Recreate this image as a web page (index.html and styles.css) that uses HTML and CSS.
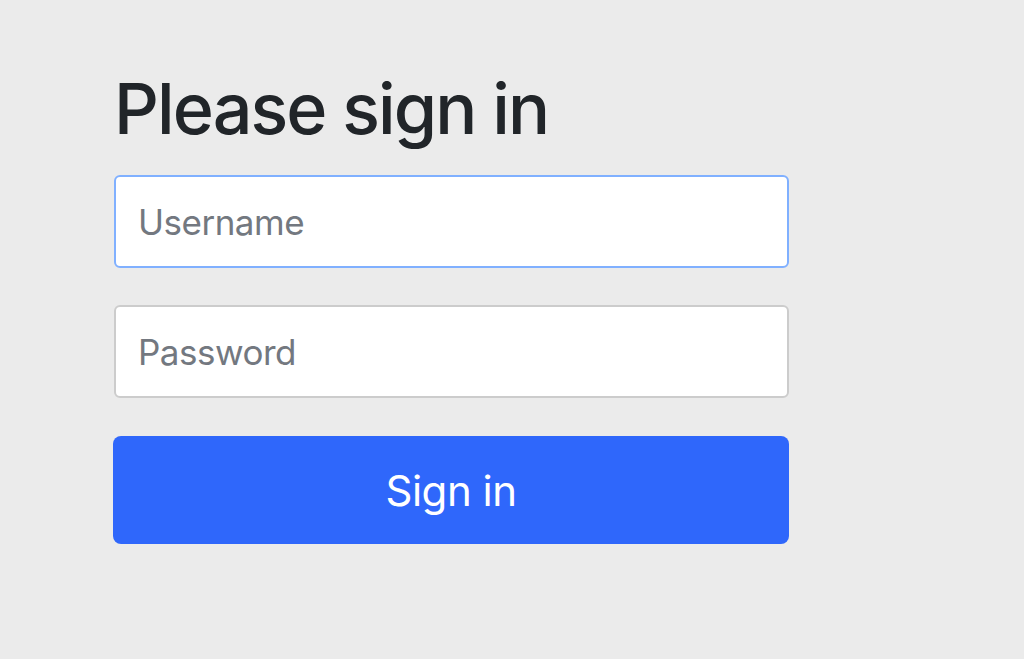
FILE: index.html
```html
<!DOCTYPE html>
<html lang="en">
<head>
<meta charset="utf-8">
<title>Please sign in</title>
<link rel="stylesheet" href="styles.css">
</head>
<body>
<div class="container">
  <form class="form-signin">
    <h2 class="heading">Please sign in</h2>
    <input class="field focused" type="text" placeholder="Username">
    <input class="field" type="password" placeholder="Password">
    <button class="btn" type="button">Sign in</button>
  </form>
</div>
</body>
</html>
```
FILE: styles.css
```css
html, body {
  margin: 0;
  padding: 0;
  background: #ebebeb;
  height: 100%;
}
body {
  font-family: Inter, "Liberation Sans", Arial, sans-serif;
  color: #212529;
}
.container {
  padding: 69px 0 0 113px;
}
.form-signin {
  width: 676px;
  display: flex;
  flex-direction: column;
}
.heading {
  margin: 0 0 26px 1px;
  font-size: 70px;
  font-weight: 500;
  line-height: 80px;
  letter-spacing: -1.9px;
}
.field {
  box-sizing: border-box;
  height: 93px;
  margin: 0 0 37px 1px;
  width: 675px;
  padding: 0 22px;
  border: 2px solid #cccccc;
  border-radius: 6px;
  background: #fff;
  font-family: Inter, "Liberation Sans", Arial, sans-serif;
  font-size: 35px;
  letter-spacing: -0.5px;
  color: #212529;
  outline: none;
}
.field::placeholder {
  color: #737880;
}
.field.focused {
  border-color: #80b0ff;
}
.btn {
  box-sizing: border-box;
  height: 108px;
  width: 676px;
  margin: 1px 0 0 0;
  border: none;
  border-radius: 8px;
  background: #2f67fb;
  color: #fff;
  font-family: Inter, "Liberation Sans", Arial, sans-serif;
  font-size: 42px;
  letter-spacing: -0.5px;
}
```
